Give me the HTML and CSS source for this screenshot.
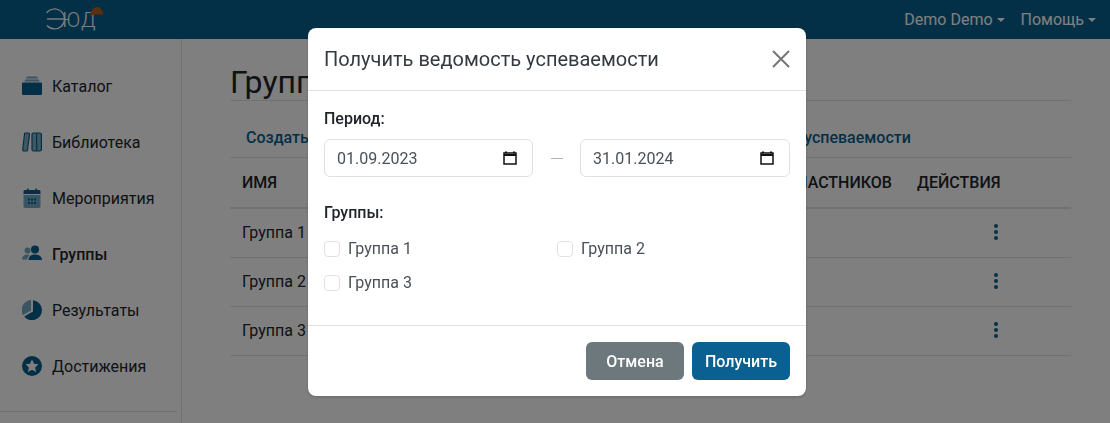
FILE: index.html
```html
<!DOCTYPE html>
<html lang="ru">
<head>
<meta charset="utf-8">
<title>Группы</title>
<link rel="stylesheet" href="styles.css">
</head>
<body>
<header class="topbar">
  <svg class="logo" width="70" height="30" viewBox="0 0 70 30">
    <path d="M2.500 8A10 10 0 1 1 3 20.500" fill="none" stroke="#fff" stroke-width="1.200"/>
    <path d="M3 14H21" stroke="#fff" stroke-width="1.400"/>
    <text x="18" y="22" class="logo-text">ЮД</text>
    <path d="M46 11C46 6 50 2 53 2C57 2 59 6 59 10C55 8.500 50 9.500 46 11Z" fill="#b5601f"/>
  </svg>
  <nav class="topnav">
    <span class="topnav-item">Demo Demo<i class="caret"></i></span>
    <span class="topnav-item">Помощь<i class="caret"></i></span>
  </nav>
</header>

<div class="layout">
  <aside class="sidebar">
    <ul class="menu">
      <li class="menu-item">
        <svg class="menu-icon" viewBox="0 0 20 20"><path class="tone" d="M5 0.500H15L16 2.500H4ZM3.500 3.500H16.500L17.500 5.500H2.500Z"/><path d="M1 6.500H19A1 1 0 0 1 20 7.500V18A1 1 0 0 1 19 19H1A1 1 0 0 1 0 18V7.500A1 1 0 0 1 1 6.500Z"/></svg>
        <span>Каталог</span>
      </li>
      <li class="menu-item">
        <svg class="menu-icon" viewBox="0 0 20 20"><g fill="none" stroke="#07618f" stroke-width="1.200"><path class="tone-fill" d="M3.500 1H6.500A1 1 0 0 1 7.500 2.200L5.500 18A1 1 0 0 1 4.500 19H1.500A1 1 0 0 1 0.700 18L2.500 2A1 1 0 0 1 3.500 1Z"/><rect class="tone-fill" x="10" y="1" width="9.400" height="18" rx="1.500"/><path d="M14.700 1V19"/></g></svg>
        <span>Библиотека</span>
      </li>
      <li class="menu-item">
        <svg class="menu-icon" viewBox="0 0 20 20"><path class="tone" d="M1.500 7H18.500V18.500A1.500 1.500 0 0 1 17 20H3A1.500 1.500 0 0 1 1.500 18.500Z"/><path d="M3 2H5V0.500H6.500V2H13.500V0.500H15V2H17A1.500 1.500 0 0 1 18.500 3.500V6H1.500V3.500A1.500 1.500 0 0 1 3 2Z"/><path d="M6 10.500H8V12.500H6ZM9 10.500H11V12.500H9ZM12 10.500H14V12.500H12ZM6 14H8V16H6ZM9 14H11V16H9ZM12 14H14V16H12Z"/></svg>
        <span>Мероприятия</span>
      </li>
      <li class="menu-item menu-item-active">
        <svg class="menu-icon" viewBox="0 0 20 20"><circle class="tone" cx="5.500" cy="6.500" r="3"/><path class="tone" d="M0 15.500C0 12 2.500 10.500 5.500 10.500C6.500 10.500 7.500 10.700 8 11C6.500 12 5.500 13.500 5.200 15.500Z"/><circle cx="13" cy="5.500" r="4"/><path d="M6.500 16C6.500 12.500 9 10.500 13 10.500C17 10.500 20 12.500 20 16Z"/></svg>
        <span>Группы</span>
      </li>
      <li class="menu-item">
        <svg class="menu-icon" viewBox="0 0 20 20"><path class="tone" d="M9 0A10 10 0 0 0 1 15L9 10.500Z"/><path d="M11 0.200A10 10 0 1 1 2.200 16.500L11 11.500Z"/></svg>
        <span>Результаты</span>
      </li>
      <li class="menu-item">
        <svg class="menu-icon" viewBox="0 0 20 20"><path fill-rule="evenodd" d="M10 0A10 10 0 1 1 10 20A10 10 0 0 1 10 0ZM10 3.500L8 7.700L3.500 8.300L6.800 11.400L6 16L10 13.800L14 16L13.200 11.400L16.500 8.300L12 7.700Z"/></svg>
        <span>Достижения</span>
      </li>
    </ul>
    <div class="sidebar-rule"></div>
  </aside>

  <main class="content">
    <h1 class="page-title">Группы</h1>
    <div class="actions">
      <a class="action">Создать группу</a>
      <a class="action">Получить ведомость успеваемости</a>
    </div>
    <div class="table">
      <div class="row row-head">
        <div>ИМЯ</div>
        <div class="cell-count">КОЛИЧЕСТВО УЧАСТНИКОВ</div>
        <div>ДЕЙСТВИЯ</div>
      </div>
      <div class="row"><div>Группа 1</div><div></div><div class="cell-menu"><i class="dots"></i></div></div>
      <div class="row"><div>Группа 2</div><div></div><div class="cell-menu"><i class="dots"></i></div></div>
      <div class="row"><div>Группа 3</div><div></div><div class="cell-menu"><i class="dots"></i></div></div>
    </div>
  </main>
</div>

<div class="overlay">
  <section class="modal">
    <div class="modal-head">
      <h2 class="modal-title">Получить ведомость успеваемости</h2>
      <svg class="close" width="18" height="18" viewBox="0 0 18 18"><path d="M1 1L17 17M17 1L1 17" stroke="#757575" stroke-width="2"/></svg>
    </div>
    <div class="modal-body">
      <div class="field-label">Период:</div>
      <div class="period">
        <div class="date-input">
          <span>01.09.2023</span>
          <svg width="14" height="14" viewBox="0 0 14 14"><path d="M3 0.500V2M11 0.500V2" stroke="#111" stroke-width="2"/><rect x="1" y="2" width="12" height="11" fill="none" stroke="#111" stroke-width="1.500"/><path d="M1 3H13V5H1Z" fill="#111"/></svg>
        </div>
        <span class="dash"></span>
        <div class="date-input">
          <span>31.01.2024</span>
          <svg width="14" height="14" viewBox="0 0 14 14"><path d="M3 0.500V2M11 0.500V2" stroke="#111" stroke-width="2"/><rect x="1" y="2" width="12" height="11" fill="none" stroke="#111" stroke-width="1.500"/><path d="M1 3H13V5H1Z" fill="#111"/></svg>
        </div>
      </div>
      <div class="field-label field-label-groups">Группы:</div>
      <div class="checks">
        <label class="check"><input type="checkbox"><span>Группа 1</span></label>
        <label class="check"><input type="checkbox"><span>Группа 2</span></label>
        <label class="check"><input type="checkbox"><span>Группа 3</span></label>
      </div>
    </div>
    <div class="modal-foot">
      <button class="btn btn-grey">Отмена</button>
      <button class="btn btn-primary">Получить</button>
    </div>
  </section>
</div>
</body>
</html>
```
FILE: styles.css
```css
* { box-sizing: border-box; }
html, body { margin: 0; height: 100%; overflow: hidden; }
body {
  font-family: Roboto, "Liberation Sans", sans-serif;
  font-size: 16px;
  color: #212529;
  background: #fff;
}

.topbar {
  height: 39px;
  background: #07618f;
  display: flex;
  align-items: center;
  justify-content: space-between;
  padding: 0 14px 0 44px;
}
.logo { display: block; margin-top: 1px; }
.logo-text { font-family: Roboto, sans-serif; font-size: 20px; font-weight: 300; letter-spacing: 1px; fill: #fff; }
.topnav { display: flex; gap: 16px; }
.topnav-item { color: #fff; font-size: 16px; display: flex; align-items: center; }
.caret {
  margin-left: 4px;
  border-top: 4px solid #fff;
  border-left: 4px solid transparent;
  border-right: 4px solid transparent;
}

.layout { display: flex; height: 384px; }
.sidebar {
  width: 182px;
  flex: none;
  border-right: 1px solid #dee2e6;
  padding-top: 19px;
}
.menu { list-style: none; margin: 0; padding: 0; }
.menu-item {
  height: 56px;
  display: flex;
  align-items: center;
  padding-left: 22px;
  gap: 10px;
}
.menu-item-active { font-weight: 500; }
.menu-icon { width: 20px; height: 20px; fill: #07618f; flex: none; }
.menu-icon .tone { fill: #07618f; opacity: .55; }
.menu-icon .tone-fill { fill: #07618f; fill-opacity: .5; }
.sidebar-rule { height: 1px; margin: 17px 4px 0 0; background: #dee2e6; }

.content { width: 841px; margin-left: 48px; flex: none; }
.page-title {
  margin: 0;
  height: 62px;
  padding-top: 24px;
  font-size: 32px;
  line-height: 38px;
  font-weight: 400;
  border-bottom: 1px solid #dee2e6;
}
.actions {
  display: flex;
  gap: 279px;
  height: 57px;
  align-items: center;
  padding: 16px 16px 0;
  border-bottom: 1px solid #dee2e6;
}
.action { color: #07618f; font-weight: 500; font-size: 16px; }
.row {
  display: grid;
  grid-template-columns: 1fr 239px 154px;
  height: 49px;
  align-items: center;
  padding: 0 0 1px 12px;
  border-bottom: 1px solid #dee2e6;
}
.row-head {
  height: 51px;
  font-weight: 500;
  border-bottom: 2px solid #dee2e6;
}
.cell-count { white-space: nowrap; }
.cell-menu { display: flex; justify-content: center; padding: 0 0 2px 4px; }
.dots, .dots::before, .dots::after {
  display: block;
  width: 4px;
  height: 4px;
  border-radius: 50%;
  background: #07618f;
}
.dots { position: relative; }
.dots::before, .dots::after { content: ""; position: absolute; left: 0; }
.dots::before { top: -6px; }
.dots::after { top: 6px; }

.overlay {
  position: fixed;
  inset: 0;
  background: rgba(0, 0, 0, .5);
  padding: 28px 0 0 308px;
}
.modal {
  width: 498px;
  height: 368px;
  background: #fff;
  border-radius: 8px;
  display: flex;
  flex-direction: column;
  box-shadow: 0 1px 3px rgba(0, 0, 0, .2);
}
.modal-head {
  height: 63px;
  flex: none;
  display: flex;
  align-items: center;
  justify-content: space-between;
  padding: 0 16px;
  border-bottom: 1px solid #dee2e6;
}
.modal-title { margin: 0; font-size: 20px; font-weight: 400; color: #343a40; }
.close { display: block; }
.modal-body { flex: 1; padding: 18px 16px 0; }
.field-label { font-weight: 500; font-size: 16px; line-height: 20px; color: #212529; }
.period { display: flex; align-items: center; margin-top: 10px; }
.date-input {
  width: 209px;
  height: 38px;
  border: 1px solid #dee2e6;
  border-radius: 6px;
  display: flex;
  align-items: center;
  justify-content: space-between;
  padding: 0 15px 0 12px;
  color: #495057;
}
.date-input + .dash + .date-input { width: 210px; }
.dash { width: 12px; height: 1px; background: #adb5bd; margin: 0 17px 0 18px; }
.field-label-groups { margin-top: 26px; }
.checks {
  display: grid;
  grid-template-columns: 233px 1fr;
  row-gap: 14px;
  margin-top: 16px;
}
.check { display: flex; align-items: center; gap: 8px; font-size: 16px; line-height: 20px; color: #495057; }
.check input {
  appearance: none;
  margin: 0;
  width: 16px;
  height: 16px;
  border: 1px solid #dee2e6;
  border-radius: 4px;
  background: #fff;
}
.modal-foot {
  height: 71px;
  flex: none;
  display: flex;
  justify-content: flex-end;
  align-items: center;
  gap: 8px;
  padding: 0 16px;
  border-top: 1px solid #dee2e6;
}
.btn {
  width: 98px;
  height: 38px;
  border: 0;
  border-radius: 6px;
  color: #fff;
  font: 500 16px Roboto, sans-serif;
}
.btn-grey { background: #6d787d; }
.btn-primary { background: #0a6090; }
```
